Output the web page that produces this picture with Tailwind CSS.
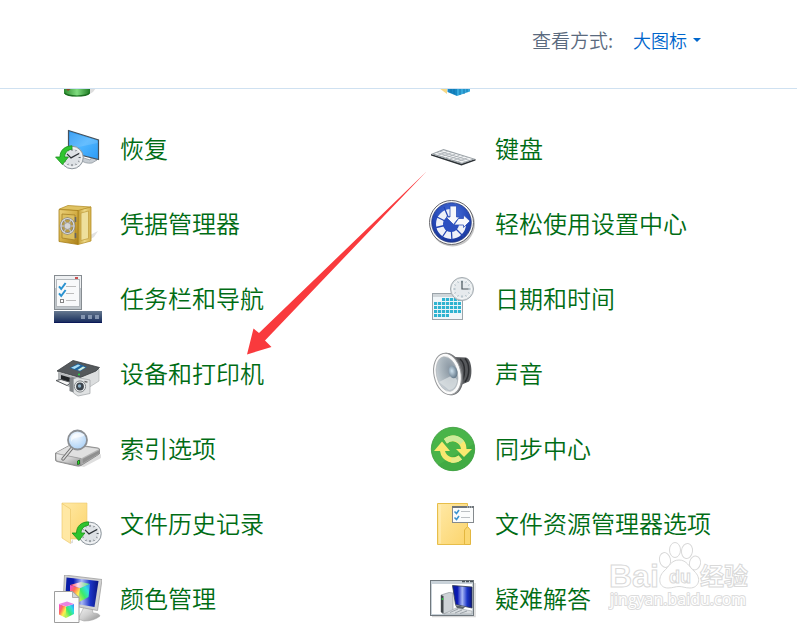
<!DOCTYPE html>
<html lang="zh-CN">
<head>
    <meta charset="UTF-8">
    <meta name="viewport" content="width=device-width, initial-scale=1.0">
    <title>所有控制面板项</title>
    <script src="https://cdn.jsdelivr.net/npm/@tailwindcss/browser@4"></script>
</head>
<body class="bg-white font-['Noto_Sans_CJK_SC',sans-serif]">
<!-- shared gradients and parts -->
<svg class="absolute size-0" aria-hidden="true">
    <defs>
        <linearGradient id="screen" x1="0" y1="0" x2="1" y2="1"><stop offset="0" stop-color="#1e90f0"/><stop offset=".5" stop-color="#4db4ff"/><stop offset="1" stop-color="#2b9af5"/></linearGradient>
        <linearGradient id="navy" x1="0" y1="0" x2="1" y2="0"><stop offset="0" stop-color="#0a1fa0"/><stop offset=".25" stop-color="#0a18b4"/><stop offset=".5" stop-color="#a9b8f5"/><stop offset=".75" stop-color="#1c35c8"/><stop offset="1" stop-color="#0a1680"/></linearGradient>
        <linearGradient id="silver" x1="0" y1="0" x2="1" y2="1"><stop offset="0" stop-color="#f4f4f4"/><stop offset=".5" stop-color="#cfcfcf"/><stop offset="1" stop-color="#8e8e8e"/></linearGradient>
        <linearGradient id="gold" x1="0" y1="0" x2="1" y2="1"><stop offset="0" stop-color="#ecd27c"/><stop offset=".5" stop-color="#d3ae45"/><stop offset="1" stop-color="#ac811b"/></linearGradient>
        <linearGradient id="goldside" x1="0" y1="0" x2="1" y2="0"><stop offset="0" stop-color="#c19a30"/><stop offset=".5" stop-color="#edd989"/><stop offset="1" stop-color="#d4b04a"/></linearGradient>
        <linearGradient id="folder" x1="0" y1="0" x2="1" y2="1"><stop offset="0" stop-color="#ffe9a6"/><stop offset="1" stop-color="#fbd46c"/></linearGradient>
        <linearGradient id="bar" x1="0" y1="0" x2="0" y2="1"><stop offset="0" stop-color="#66788f"/><stop offset=".6" stop-color="#33486e"/><stop offset="1" stop-color="#14265c"/></linearGradient>
        <linearGradient id="bin" x1="0" y1="0" x2="1" y2="0"><stop offset="0" stop-color="#2d8a2d"/><stop offset=".5" stop-color="#7fdc7f"/><stop offset="1" stop-color="#1d7a22"/></linearGradient>
        <radialGradient id="blue" cx=".5" cy=".3" r=".8"><stop offset="0" stop-color="#4a72dc"/><stop offset=".6" stop-color="#2346b4"/><stop offset="1" stop-color="#152f8c"/></radialGradient>
        <radialGradient id="lens" cx=".4" cy=".3" r=".8"><stop offset="0" stop-color="#f2f8ff"/><stop offset="1" stop-color="#a4cdf5"/></radialGradient>
        <radialGradient id="cone" cx=".7" cy=".4" r=".8"><stop offset="0" stop-color="#8794a0"/><stop offset=".5" stop-color="#a9b4bc"/><stop offset="1" stop-color="#cdd4d9"/></radialGradient>
        <radialGradient id="dome" cx=".4" cy=".4" r=".6"><stop offset="0" stop-color="#cfe2ef"/><stop offset="1" stop-color="#65798a"/></radialGradient>
        <linearGradient id="hueleft" x1="0" y1="0" x2="1" y2="1"><stop offset="0" stop-color="#f04ae8"/><stop offset=".35" stop-color="#ff6a5a"/><stop offset=".65" stop-color="#fff04a"/><stop offset="1" stop-color="#8cf06a"/></linearGradient>
        <linearGradient id="hueright" x1="1" y1="0" x2="0" y2="1"><stop offset="0" stop-color="#3a7cff"/><stop offset=".3" stop-color="#30e0e0"/><stop offset=".6" stop-color="#3cea6a"/><stop offset="1" stop-color="#e6f04a"/></linearGradient>
        <linearGradient id="hueback" x1="0" y1="0" x2="1" y2="0"><stop offset="0" stop-color="#ff3a3a"/><stop offset=".4" stop-color="#ffd8f0"/><stop offset="1" stop-color="#4ae87a"/></linearGradient>
        <g id="clock">
            <circle r="11.3" fill="#e4e7ea" stroke="#8f979e" stroke-width="1"/>
            <circle r="9.6" fill="#dde1e5" stroke="#f7f8f9" stroke-width="1"/>
            <path d="M0-8.6v2M0 6.6v2M-8.6 0h2M6.6 0h2M4.3-7.4l-.7 1.1M-4.3-7.4l.7 1.1M4.3 7.4l-.7-1.1M-4.3 7.4l.7-1.1M7.4-4.3l-1.1.7M-7.4-4.3l1.1.7M7.4 4.3l-1.1-.7M-7.4 4.3l1.1-.7" stroke="#5c6369" stroke-width="1" fill="none"/>
            <path d="M-5-3.6L-1 .4L7-4" stroke="#2c3136" stroke-width="1.3" fill="none"/>
        </g>
        <path id="back" d="M0-12.2C-7-12-12-8-12-1H-16.4L-9.6 6.6L-3.6-1H-7.4C-7.4-5-5-8-0-8.8Z" fill="#2ec42e" stroke="#189018" stroke-width=".8"/>
        <path id="tick" d="M0 2.4L2.2 5L6.6-1" fill="none" stroke="#2a92d0" stroke-width="2"/>
    </defs>
</svg>

<div class="relative flex min-h-screen flex-col overflow-hidden">
    <header class="flex items-center justify-end border-b border-[#cfe1f1] bg-white pr-24 pt-6 pb-8">
        <label for="view-mode" class="mr-5 text-[19px] leading-8 font-[350] text-[#5a6a7e]">查看方式:</label>
        <div class="flex items-center gap-1.5">
            <select id="view-mode" class="cursor-pointer appearance-none bg-transparent text-[18px] leading-8 font-[350] text-[#0066cc] focus:outline-none">
                <option>大图标</option>
                <option>小图标</option>
                <option>类别</option>
            </select>
            <svg class="pointer-events-none h-1 w-2" viewBox="0 0 8 4" aria-hidden="true"><path d="M0 0h8L4 4Z" fill="#0066cc"/></svg>
        </div>
    </header>

    <main class="grow overflow-hidden">
        <!-- list is scrolled a little, so only the foot of the first row shows -->
        <nav class="-mt-[39px] grid grid-cols-2 gap-x-[7px] gap-y-[27px] pl-[54px] text-2xl font-[350] whitespace-nowrap text-[#006c14]">
            <a href="#" aria-label="回收站" class="flex h-12 items-center">
                <svg class="size-12" viewBox="0 0 48 48">
                    <path d="M35 38h7l-3 4-5 3Z" fill="#ddd"/>
                    <path d="M10 34H36V43C34 47 12 48 10 43Z" fill="url(#bin)"/>
                    <path d="M10.500 43C14 47 32 47 35.500 43" fill="none" stroke="#1b6e20" stroke-width="1.200"/>
                    <path d="M11 38l3 3 4-3Z" fill="#8a4a28"/>
                </svg>
            </a>
            <a href="#" aria-label="家长控制" class="flex h-12 items-center">
                <svg class="size-12" viewBox="0 0 48 48">
                    <path d="M10 38h8v6Z" fill="#f6d886"/>
                    <path d="M18.500 36L28 39v7L18.500 42Z" fill="#1687c4"/>
                    <path d="M28 39L41 36v5.500L28 46Z" fill="#36a9dc"/>
                    <path d="M22 38v5M25 39v5M31 39v6M35 38v6M38 37v5" stroke="#0d6ca6" stroke-width=".8"/>
                </svg>
            </a>

            <a href="#" class="flex h-12 items-center gap-[18px] hover:underline">
                <svg class="size-12 shrink-0" viewBox="0 0 48 48" aria-hidden="true">
                    <path d="M27 32l9 3 2-3 5 3-5 3q-7 1-11-3Z" fill="#c7cdd3" stroke="#8a9299" stroke-width=".7"/>
                    <path d="M14.500 5.500L44.500 15V34.500L14.500 27Z" fill="url(#screen)" stroke="#45525e" stroke-width="1.200"/>
                    <path d="M15.500 7L43.500 15.800V18L15.500 24Z" fill="#fff" opacity=".14"/>
                    <use href="#clock" x="18" y="32.500"/>
                    <use href="#back" x="18" y="33"/>
                </svg>
                <span class="pb-[3px]">恢复</span>
            </a>
            <a href="#" class="flex h-12 items-center gap-[18px] hover:underline">
                <svg class="size-12 shrink-0" viewBox="0 0 48 48" aria-hidden="true">
                    <path d="M2 29v1.500L32.500 40.500L46.500 35.500v-1.500L32.500 38.500Z" fill="#2c3135"/>
                    <path d="M2 29L14.500 24L46.500 34L32.500 39Z" fill="#9aa1a6"/>
                    <path d="M5 28.800L14.500 25.200L43.500 34L33 37.700Z" fill="#f3f4f5"/>
                    <path d="M8 27.600L36.500 36.500M11 26.400L40 35.300M9 30.300L18.500 26.600M13 31.500L22.500 27.800M17 32.700L26.500 29M21 34L30.500 30.300M25 35.200L34.500 31.500M29 36.500L38.500 32.800" stroke="#9ca3a9" stroke-width=".7"/>
                </svg>
                <span class="pb-[3px]">键盘</span>
            </a>

            <a href="#" class="flex h-12 items-center gap-[18px] hover:underline">
                <svg class="size-12 shrink-0" viewBox="0 0 48 48" aria-hidden="true">
                    <path d="M36 35l8-4-4 6-10 6Z" fill="#e2e2e2"/>
                    <path d="M5.500 9L14 5.500L37 7L24 11Z" fill="#dfc262" stroke="#b8932f" stroke-width=".8"/>
                    <path d="M24 10.500L37 7V41L24 44.500Z" fill="url(#goldside)" stroke="#b8922c" stroke-width=".8"/>
                    <path d="M27 13L34.500 11V38.500L27 40.500Z" fill="#eedf9c" stroke="#c3a040" stroke-width=".8"/>
                    <path d="M5 9.500L24 10.500V44.500L5 41.500Z" fill="url(#gold)" stroke="#a67d18" stroke-width=".8"/>
                    <path d="M8 14L21 15V40L8 38Z" fill="#dcbf60" stroke="#a58028" stroke-width=".8"/>
                    <path d="M21.500 17v5M21.500 33v5" stroke="#666" stroke-width="1.600"/>
                    <ellipse cx="13.500" cy="26" rx="6.600" ry="7.500" fill="#b99b45" stroke="#808080" stroke-width="2.400"/>
                    <path d="M7 26h13M10 20l7 12M17 20l-7 12" stroke="#bbb" stroke-width="1.400"/>
                    <ellipse cx="13.500" cy="26" rx="6.600" ry="7.500" fill="none" stroke="#dcdcdc" stroke-width="1.200"/>
                    <circle cx="13.500" cy="26" r="3.400" fill="#d4d4d4" stroke="#8a8a8a" stroke-width=".6"/>
                </svg>
                <span class="pb-[3px]">凭据管理器</span>
            </a>
            <a href="#" class="flex h-12 items-center gap-[18px] hover:underline">
                <svg class="size-12 shrink-0" viewBox="0 0 48 48" aria-hidden="true">
                    <circle cx="23.500" cy="24" r="22.500" fill="#c5c5c5"/>
                    <circle cx="22.500" cy="22.500" r="22" fill="#fafafa" stroke="#69696e" stroke-width="1"/>
                    <circle cx="22.500" cy="22.500" r="19.800" fill="url(#blue)" stroke="#283c80" stroke-width=".8"/>
                    <path d="M22 12.500A11.500 11.500 0 1 0 33.500 24" fill="none" stroke="#eef1f8" stroke-width="7"/>
                    <path d="M22 24L15 7M22 24L6 16M22 24L5 28M22 24L12 39M22 24L23 41M22 24L35 37" stroke="#2346b4" stroke-width="1.300"/>
                    <circle cx="22" cy="24" r="7.500" fill="#2c50c0"/>
                    <path d="M21 6H27.500V17H30.500L24.500 24.500L17 17H21Z" fill="#f7f8fb" stroke="#2c4fb8" stroke-width=".8"/>
                    <path d="M25 25L29.500 18.500H34.500V15L41 21L34.500 27.500V25Z" fill="#f7f8fb" stroke="#2c4fb8" stroke-width=".8"/>
                </svg>
                <span class="pb-[3px]">轻松使用设置中心</span>
            </a>

            <a href="#" class="flex h-12 items-center gap-[18px] hover:underline">
                <svg class="size-12 shrink-0" viewBox="0 0 48 48" aria-hidden="true">
                    <rect x=".5" y=".5" width="27" height="34" fill="#bfc5ca" stroke="#868c91"/>
                    <rect x="1" y="1" width="26" height="12" fill="#eef0f2"/>
                    <rect x="21" y="2" width="3" height="2" fill="#c95050"/>
                    <rect x="2.500" y="4.500" width="23" height="27" fill="#f8f9fa" stroke="#b3b8bc"/>
                    <use href="#tick" x="5" y="9"/>
                    <use href="#tick" x="5" y="16"/>
                    <rect x="6.500" y="24.500" width="3" height="3" fill="#fff" stroke="#858585"/>
                    <path d="M12 11.500h10M12 18.500h8M12 25.500h10" stroke="#bdbdbd"/>
                    <rect y="36" width="48" height="12" fill="url(#bar)"/>
                    <path d="M0 47.500h48" stroke="#0b1858"/>
                    <path d="M27 40h4v4h-4zM34 40h4v4h-4zM41 40h4v4h-4z" fill="#8495b0"/>
                </svg>
                <span class="pb-[3px]">任务栏和导航</span>
            </a>
            <a href="#" class="flex h-12 items-center gap-[18px] hover:underline">
                <svg class="size-12 shrink-0" viewBox="0 0 48 48" aria-hidden="true">
                    <rect x="3.500" y="18.500" width="30" height="26" fill="#f0f6f9" stroke="#9ba4aa"/>
                    <rect x="4" y="19" width="29" height="3" fill="#d0d6da"/>
                    <path d="M13 24.500h19M5 28.500h27M5 32.500h27M5 36.500h27M5 40.500h15" stroke="#2fb3d0" stroke-width="3.200" stroke-dasharray="3.200 .8"/>
                    <circle cx="33" cy="14" r="11.500" fill="#dfe4e7" stroke="#a4abb0"/>
                    <circle cx="33" cy="14" r="9.500" fill="#e6eaed" stroke="#f9fafa"/>
                    <path d="M33 5.500v2M33 20.500v2M24.500 14h2M39.500 14h2M37.300 6.600l-.6 1M28.700 6.600l.6 1M37.300 21.400l-.6-1M28.700 21.400l.6-1M25.600 9.700l1 .6M40.400 9.700l-1 .6M25.600 18.300l1-.6M40.400 18.300l-1-.6" stroke="#8fa4b0" stroke-width="1"/>
                    <path d="M33 6v8h6.500" fill="none" stroke="#4a555c" stroke-width="1.200"/>
                </svg>
                <span class="pb-[3px]">日期和时间</span>
            </a>

            <a href="#" class="flex h-12 items-center gap-[18px] hover:underline">
                <svg class="size-12 shrink-0" viewBox="0 0 48 48" aria-hidden="true">
                    <path d="M4 22L25 28V39L15 37L4 31Z" fill="#b4b7b9"/>
                    <path d="M25 28L45 19V31L34 38L25 39Z" fill="#dcdedf" stroke="#a5a8aa" stroke-width=".6"/>
                    <path d="M3 21L19 10.500L45.500 17.500L42 21L26 27.500Z" fill="#55595c" stroke="#3a3d40" stroke-width=".8"/>
                    <path d="M15.500 18L24 13.500L33 17L26 21.500Z" fill="#20659e"/>
                    <path d="M17 17.800L24 14.500L26.500 15.500L20.500 19Z" fill="#a8dcf4"/>
                    <path d="M23.500 20L29 16.500L31.500 17.500L26 20.700Z" fill="#d0eedd"/>
                    <path d="M7 25L17 28V33L7 30Z" fill="#202325"/>
                    <path d="M2 30.500L7 29.500L17 32.500L13 35.500Z" fill="#f5f5f5" stroke="#55595c" stroke-width="1"/>
                    <circle cx="25" cy="24.500" r="1" fill="#27dc3e"/>
                    <path d="M15.500 28.500L18 27L23 28.500V44L15.500 41Z" fill="#808487"/>
                    <path d="M19.500 29L23 27.500L36 30V43.500L24 46L19.500 43Z" fill="#e0e2e3" stroke="#9ea2a5" stroke-width=".7"/>
                    <circle cx="26" cy="36.500" r="5.600" fill="#eceeef" stroke="#84898c"/>
                    <circle cx="26" cy="36.500" r="3.900" fill="#3c444c"/>
                    <circle cx="25.500" cy="36" r="1.700" fill="#8fb0c6"/>
                    <path d="M30.500 31.500l3 .6" stroke="#666" stroke-width="1.400"/>
                </svg>
                <span class="pb-[3px]">设备和打印机</span>
            </a>
            <a href="#" class="flex h-12 items-center gap-[18px] hover:underline">
                <svg class="size-12 shrink-0" viewBox="0 0 48 48" aria-hidden="true">
                    <path d="M24 7L37 7.500C43 9 44 26 40 31.500L27 37Z" fill="#56585b"/>
                    <path d="M31 9C37 14 37 27 31 34M36 8.500C41 14 41 25 36 32" stroke="#2b2d30" stroke-width="1.500" fill="none"/>
                    <ellipse cx="20" cy="24" rx="14" ry="21.500" transform="rotate(-12 20 24)" fill="#6b6d70"/>
                    <ellipse cx="18.500" cy="24" rx="13.500" ry="21" transform="rotate(-12 18.500 24)" fill="#fbfbfb" stroke="#97999b"/>
                    <ellipse cx="18" cy="24" rx="10.600" ry="17.600" transform="rotate(-12 18 24)" fill="url(#cone)" stroke="#b2b6b9" stroke-width=".6"/>
                    <path d="M10 32L24 25L28 30C28 36 24 40 20 40Z" fill="#e2e6e8" opacity=".65"/>
                    <ellipse cx="24" cy="22" rx="4.400" ry="6.400" transform="rotate(-12 24 22)" fill="url(#dome)"/>
                </svg>
                <span class="pb-[3px]">声音</span>
            </a>

            <a href="#" class="flex h-12 items-center gap-[18px] hover:underline">
                <svg class="size-12 shrink-0" viewBox="0 0 48 48" aria-hidden="true">
                    <path d="M25 41L47 29L47 33L30 42Z" fill="#dedede"/>
                    <path d="M1.500 28L17 19.500Q19 19 21 19.500L44 23Q46 23.500 45.500 25V29L27 40.500Q25 41.500 23 41L3 36.500Q1 36 1.500 34Z" fill="#b4b4b4" stroke="#808080" stroke-width=".8"/>
                    <path d="M2 28L17 20L45 24L27 33.500Z" fill="#e0e0e0"/>
                    <path d="M2 28.500L27 33.500V40.500L23 40.500L3 36Q2 35 2 34Z" fill="url(#silver)" stroke="#8c8c8c" stroke-width=".6"/>
                    <path d="M28.500 34L45 25.500V28.500L28.500 38.500Z" fill="#909090"/>
                    <path d="M23.500 36L25.500 35V39L23.500 39.500Z" fill="#20dc20" stroke="#1a5c1a" stroke-width=".8"/>
                    <path d="M18 23L9 34" stroke="#686868" stroke-width="3.400" stroke-linecap="round"/>
                    <path d="M18 23L9 34" stroke="#d8d8d8" stroke-width="1.600" stroke-linecap="round"/>
                    <circle cx="23.500" cy="15" r="9.500" fill="url(#lens)" stroke="#8b8f94" stroke-width="1.800"/>
                    <path d="M17 17C21 10 26 14 31 10C28 7 19 7 17 13Z" fill="#fff" opacity=".6"/>
                </svg>
                <span class="pb-[3px]">索引选项</span>
            </a>
            <a href="#" class="flex h-12 items-center gap-[18px] hover:underline">
                <svg class="size-12 shrink-0" viewBox="0 0 48 48" aria-hidden="true">
                    <circle cx="24" cy="24" r="21.700" fill="#49b449" stroke="#3a993b" stroke-width=".8"/>
                    <path d="M9 40A21.700 21.700 0 0 0 45 19Z" fill="#3ca53f" opacity=".6"/>
                    <path d="M15 14A13.500 13.500 0 0 1 37.500 24H43L35 32L27 24H32A8.500 8.500 0 0 0 18 18.500Z" fill="#fae870"/>
                    <path d="M15 14A13.500 13.500 0 0 1 35 16L31 19.500A8.500 8.500 0 0 0 18 18.500Z" fill="#cdeb9a"/>
                    <path d="M33 34.500A13.500 13.500 0 0 1 11 26H5L13 16.500L21 26H16A8.500 8.500 0 0 0 29.500 30.500Z" fill="#fae870"/>
                    <path d="M33 34.500A13.500 13.500 0 0 1 22 37.500L22.500 33A8.500 8.500 0 0 0 29.500 30.500Z" fill="#e7ec88"/>
                </svg>
                <span class="pb-[3px]">同步中心</span>
            </a>

            <a href="#" class="flex h-12 items-center gap-[18px] hover:underline">
                <svg class="size-12 shrink-0" viewBox="0 0 48 48" aria-hidden="true">
                    <path d="M8 3H33V39H16Z" fill="url(#folder)" stroke="#edcb70" stroke-width=".6"/>
                    <path d="M8 3.500L16.500 9V43.500L8 38Z" fill="#ffe8a4" stroke="#e9c361" stroke-width=".6"/>
                    <path d="M16 43.500l3-4.500v4Z" fill="#ddd"/>
                    <use href="#clock" x="36" y="33.500"/>
                    <use href="#back" x="34.500" y="34"/>
                </svg>
                <span class="pb-[3px]">文件历史记录</span>
            </a>
            <a href="#" class="flex h-12 items-center gap-[18px] hover:underline">
                <svg class="size-12 shrink-0" viewBox="0 0 48 48" aria-hidden="true">
                    <path d="M8.500 3.500H38.500V44.500H8.500Z" fill="url(#folder)" stroke="#e7be4a"/>
                    <path d="M11 5V43.500" stroke="#fff0be"/>
                    <path d="M35.500 44.500V30L38.500 26.500L41.500 30V44.500Z" fill="#fbd873" stroke="#e3b740"/>
                    <rect x="23.500" y="7" width="21" height="15.500" fill="#fbfcfc" stroke="#858a8e"/>
                    <path d="M23 7h22" stroke="#6f757a" stroke-width="2"/>
                    <path d="M38 7h1M40 7h1M42 7h1" stroke="#dce2e6"/>
                    <path d="M25.500 11.500L27.500 13.500L30 10M25.500 17.500L27.500 19.500L30 16" fill="none" stroke="#3c94d0" stroke-width="1.600"/>
                    <path d="M32 11.500h9M32 17.500h9" stroke="#bcc0c3"/>
                </svg>
                <span class="pb-[3px]">文件资源管理器选项</span>
            </a>

            <a href="#" class="flex h-12 items-center gap-[18px] hover:underline">
                <svg class="size-12 shrink-0" viewBox="0 0 48 48" aria-hidden="true">
                    <path d="M30 32L38 33L39 38Q45 38 46 41Q40 46 30 46L24 44Z" fill="url(#silver)" stroke="#a5a5a5" stroke-width=".6"/>
                    <path d="M10.500 0L48 4.500L43.500 35.500L9 29Z" fill="#d1d1d1" stroke="#a0a0a0" stroke-width=".8"/>
                    <path d="M12.500 2.500L44.500 6L40.500 32L11 27Z" fill="url(#navy)"/>
                    <path d="M16 10L26 13L25 27L16 21Z" fill="url(#hueleft)"/>
                    <path d="M26 13L36 9L34.500 22L25 27Z" fill="url(#hueright)"/>
                    <path d="M16 10L27 7L36 9L26 13Z" fill="url(#hueback)"/>
                    <path d="M.5 16.500H18.500L25 22.500V47.500H.5Z" fill="#fdfdfd" stroke="#9e9e9e"/>
                    <path d="M18.500 16.500V22.500H25Z" fill="#d6d6d6" stroke="#9e9e9e" stroke-width=".8"/>
                    <path d="M5 29L12 31.500V43L5 39.500Z" fill="url(#hueleft)"/>
                    <path d="M12 31.500L20 29V39L12 43Z" fill="url(#hueright)"/>
                    <path d="M5 29L13 26.500L20 29L12 31.500Z" fill="#e884e0"/>
                </svg>
                <span class="pb-[3px]">颜色管理</span>
            </a>
            <a href="#" class="flex h-12 items-center gap-[18px] hover:underline">
                <svg class="size-12 shrink-0" viewBox="0 0 48 48" aria-hidden="true">
                    <path d="M3 41.500H46V8" fill="none" stroke="#d6d6d6" stroke-width="1.500"/>
                    <rect x="1.500" y="5.500" width="43" height="35" fill="#c9d2d9" stroke="#70787e"/>
                    <path d="M33 6.500h3M37 6.500h3M41 6.500h3" stroke="#4b545a" stroke-width="1.400"/>
                    <rect x="3" y="9" width="40" height="30" fill="#fff"/>
                    <path d="M12 20L20 17.500L24 18V36L14 39L12 37Z" fill="#cdd2d6" stroke="#92999e" stroke-width=".7"/>
                    <path d="M12 20L14.500 21V38.500L12 37Z" fill="#42484c"/>
                    <circle cx="13.500" cy="24" r=".9" fill="#26d03a"/>
                    <path d="M23.500 10.500L43 12V33L26.500 29.500Z" fill="url(#navy)" stroke="#30384c" stroke-width=".8"/>
                    <path d="M15 39L27 33L43 36V39Z" fill="#d8dcdf" stroke="#9aa1a6" stroke-width=".6"/>
                    <path d="M21 37.500L29 34M26 38L33 35M31 38.500L38 36" stroke="#8d949a" stroke-width=".8"/>
                    <path d="M26 30L36 32L34 34L28 33Z" fill="#5b636a"/>
                </svg>
                <span class="pb-[3px]">疑难解答</span>
            </a>
        </nav>
    </main>

    <!-- pointer to the printers entry -->
    <svg class="pointer-events-none absolute top-[170px] left-[244px] h-[188px] w-[184px]" viewBox="0 0 184 188" aria-hidden="true">
        <path d="M182.500 1.500L15 163L9.500 158.500L3 184.500L27.500 177L21 170.500Z" fill="#f93a3d"/>
    </svg>

    <!-- watermark -->
    <svg class="pointer-events-none absolute top-[540px] right-[39px] h-[72px] w-[150px] font-['Liberation_Sans','Noto_Sans_CJK_SC',sans-serif]" viewBox="0 0 150 72">
        <g fill="#fff" stroke="#d9d9d9" stroke-width="1">
            <text x="1" y="47" font-size="32" font-weight="700">Bai</text>
            <ellipse cx="57" cy="20" rx="5.500" ry="7.500" transform="rotate(-12 57 20)"/>
            <ellipse cx="67" cy="10" rx="5.500" ry="7.500"/>
            <ellipse cx="79" cy="11" rx="5.500" ry="7.500" transform="rotate(8 79 11)"/>
            <ellipse cx="87" cy="23" rx="5.500" ry="7" transform="rotate(12 87 23)"/>
            <path d="M71 20C79 20 81 27 86 31C94 38 91 48 82 48C77 48 75 46.500 71 46.500S65 48 60 48C51 48 49 38 56 31C61 27 63 20 71 20Z"/>
            <text x="61" y="43" font-size="18" font-weight="700">du</text>
            <text x="92" y="45" font-size="24" font-weight="700">经验</text>
        </g>
        <text x="2" y="65" font-size="16" fill="#fff" stroke="#dcdcdc" stroke-width="2" paint-order="stroke" class="font-['Open_Sans',sans-serif]">jingyan.baidu.com</text>
    </svg>
</div>
</body>
</html>
